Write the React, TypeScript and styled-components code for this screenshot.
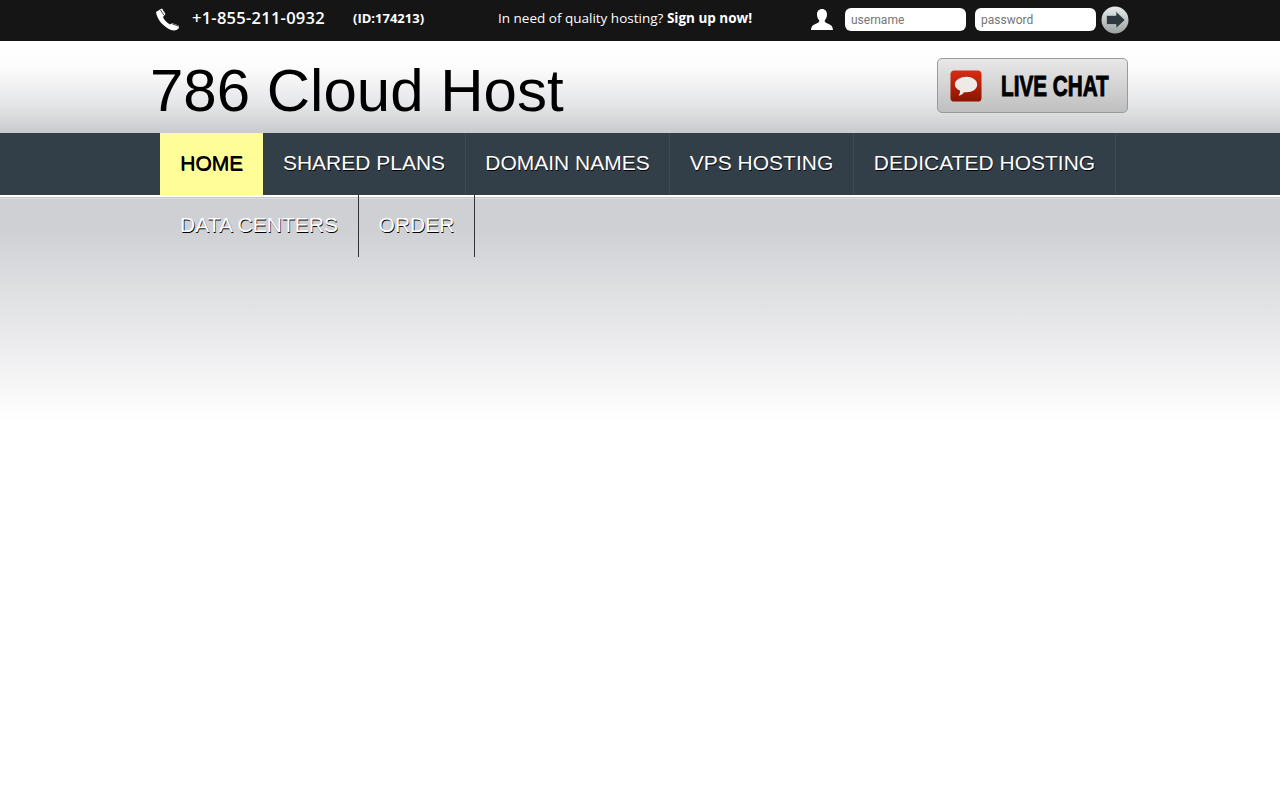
import React from 'react';
import styled, { createGlobalStyle } from 'styled-components';

const GlobalStyle = createGlobalStyle`
  html, body { margin: 0; padding: 0; background: #fff; }
  body { font-family: "Liberation Sans", Arial, sans-serif; }
`;

const TopBar = styled.div`
  height: 41px;
  background: #151515;
`;

const Wrap = styled.div`
  width: 980px;
  margin: 0 auto;
`;

const TopRow = styled(Wrap)`
  box-sizing: border-box;
  height: 41px;
  padding-bottom: 2px;
  display: flex;
  align-items: center;
  color: #fff;
  font-family: "Open Sans", "Noto Sans", sans-serif;
`;

const PhoneIcon = styled.svg`
  width: 24px;
  height: 24px;
  margin-left: 5px;
  flex: none;
`;

const PhoneNumber = styled.span`
  margin-left: 13px;
  width: 161px;
  font-size: 16.5px;
  font-weight: 600;
  letter-spacing: 0.25px;
  margin-top: -4px;
`;

const SmallId = styled.span`
  width: 145px;
  font-size: 13px;
  font-weight: 700;
  margin-top: -4px;
`;

const Promo = styled.span`
  width: 312px;
  font-size: 13.5px;
  margin-top: -4px;
  b { font-weight: 700; }
`;

const UserIcon = styled.svg`
  width: 24px;
  height: 24px;
  flex: none;
`;

const LoginInput = styled.input`
  box-sizing: border-box;
  width: 121px;
  height: 23px;
  margin-left: ${p => p.$gap}px;
  padding: 0 6px;
  border: 0;
  border-radius: 6px;
  background: #fff;
  font-family: Roboto, "Liberation Sans", sans-serif;
  font-size: 12px;
  outline: none;
  &::placeholder { color: #757575; opacity: 1; }
`;

const GoButton = styled.svg`
  width: 28px;
  height: 28px;
  margin-left: 5px;
  flex: none;
`;

const Header = styled.div`
  height: 92px;
  background: linear-gradient(#fff 0%, #fcfcfc 30%, #e4e5e7 70%, #c8cacd 100%);
`;

const HeaderRow = styled(Wrap)`
  height: 92px;
  display: flex;
  align-items: flex-start;
  justify-content: space-between;
`;

const SiteTitle = styled.h1`
  margin: 15px 0 0;
  font-size: 60px;
  line-height: 69px;
  font-weight: 400;
  color: #000;
`;

const LiveChat = styled.a`
  box-sizing: border-box;
  width: 191px;
  height: 55px;
  margin: 17px 2px 0 0;
  display: flex;
  align-items: center;
  padding-left: 12px;
  border: 1px solid #9a9a9a;
  border-radius: 5px;
  background: linear-gradient(#e8e8e9, #bfbfbf);
`;

const ChatIcon = styled.svg`
  width: 32px;
  height: 32px;
  flex: none;
`;

const ChatLabel = styled.span`
  display: inline-block;
  margin: 1px 0 0 19px;
  font-size: 30px;
  font-weight: 700;
  color: #000;
  -webkit-text-stroke: 1px #000;
  white-space: nowrap;
  transform: scaleX(0.69);
  transform-origin: left center;
`;

const NavBar = styled.nav`
  height: 62px;
  background: #333f48;
`;

const NavList = styled.ul`
  width: 960px;
  height: 62px;
  margin: 0 auto;
  padding: 0;
  list-style: none;
  display: flex;
  flex-wrap: wrap;
  align-content: flex-start;
  position: relative;
  z-index: 1;
`;

const NavItem = styled.li`
  box-sizing: border-box;
  width: ${p => p.$width}px;
  height: 62px;
  padding-bottom: 2px;
  display: flex;
  align-items: center;
  justify-content: center;
  font-size: 21px;
  white-space: nowrap;
  color: ${p => (p.$active ? '#000' : '#fff')};
  background: ${p => (p.$active ? '#fffd98' : 'transparent')};
  text-shadow: 0.6px 0.6px 0 #000;
  border-right: ${p => (p.$active ? '0' : '1px solid')};
  border-right-color: ${p => (p.$lower ? '#333' : '#3f4a52')};
`;

const Content = styled.main`
  height: 605px;
  box-sizing: border-box;
  border-top: 2px solid #fff;
  background: linear-gradient(#cfd0d4 0, #cfd0d4 30px, #fff 225px);
  box-shadow: inset 0 1px 0 #c6c8ca, inset 0 2px 0 #dcdde0;
`;

const items = [
  { label: 'SHARED PLANS', width: 203 },
  { label: 'DOMAIN NAMES', width: 204 },
  { label: 'VPS HOSTING', width: 184 },
  { label: 'DEDICATED HOSTING', width: 262 },
];
const lowerItems = [
  { label: 'DATA CENTERS', width: 199 },
  { label: 'ORDER', width: 116 },
];

export default function App() {
  return (
    <>
      <GlobalStyle />
      <TopBar>
        <TopRow>
          <PhoneIcon viewBox="0 0 24 24" aria-hidden="true">
            <path
              fill="#fff"
              d="M1 4 5 1.500 7 .5l3.500 5.500L8 9c1 3 4 6 7 7.500l2-1.500 6.500 2.500.5 2.500c-2 2.500-5 3-8 2C9 19 2 12 1 4Z"
            />
            <path stroke="#151515" strokeWidth="0.8" fill="none" d="M5.500 2 9 7.200M16.500 15.500l6.800 2.600" />
          </PhoneIcon>
          <PhoneNumber>+1-855-211-0932</PhoneNumber>
          <SmallId>(ID:174213)</SmallId>
          <Promo>
            In need of quality hosting? <b>Sign up now!</b>
          </Promo>
          <UserIcon viewBox="0 0 24 24" aria-hidden="true">
            <path
              fill="#fff"
              d="M12 1c3.200 0 5 2.300 5 5.500 0 2.500-1 4.700-2.300 6 0 1.500.8 2.200 2.300 2.800 3 1.200 5.500 2 6 6.700H1c.5-4.700 3-5.500 6-6.700 1.500-.6 2.300-1.300 2.300-2.800C8 11.200 7 9 7 6.500 7 3.300 8.800 1 12 1Z"
            />
          </UserIcon>
          <LoginInput $gap={11} placeholder="username" readOnly />
          <LoginInput $gap={9} placeholder="password" readOnly />
          <GoButton viewBox="0 0 28 28" aria-hidden="true">
            <defs>
              <linearGradient id="goFill" x1="0" y1="0" x2="0" y2="1">
                <stop offset="0" stopColor="#e8ecec" />
                <stop offset="1" stopColor="#9aa2a1" />
              </linearGradient>
            </defs>
            <circle cx="14" cy="14" r="13.500" fill="url(#goFill)" />
            <path
              fill="#2f3a40"
              stroke="#cfd5d5"
              strokeWidth="0.6"
              d="M5.500 9.500h9.500V5.500l9 8.500-9 8.500v-4H5.500Z"
            />
          </GoButton>
        </TopRow>
      </TopBar>
      <Header>
        <HeaderRow>
          <SiteTitle>786 Cloud Host</SiteTitle>
          <LiveChat>
            <ChatIcon viewBox="0 0 33 33" aria-hidden="true">
              <defs>
                <linearGradient id="chatFill" x1="0" y1="0" x2="0" y2="1">
                  <stop offset="0" stopColor="#d92b14" />
                  <stop offset="1" stopColor="#8a1500" />
                </linearGradient>
              </defs>
              <rect x="0.500" y="0.500" width="32" height="32" rx="4" fill="url(#chatFill)" />
              <path
                fill="#eeeae6"
                d="M17 7c6 0 11 3.200 11 8s-5 8-11 8c-.8 0-1.600 0-2.400-.1-1.400 1.700-3.300 3-5.600 3.600.8-1.300 1.300-3 1.400-5C7 20 5 17.800 5 15c0-4.800 6-8 12-8Z"
              />
            </ChatIcon>
            <ChatLabel>LIVE CHAT</ChatLabel>
          </LiveChat>
        </HeaderRow>
      </Header>
      <NavBar>
        <NavList>
          <NavItem $active $width={103}>HOME</NavItem>
          {items.map(item => (
            <NavItem key={item.label} $width={item.width}>{item.label}</NavItem>
          ))}
          {lowerItems.map(item => (
            <NavItem key={item.label} $width={item.width} $lower>
              {item.label}
            </NavItem>
          ))}
        </NavList>
      </NavBar>
      <Content />
    </>
  );
}
